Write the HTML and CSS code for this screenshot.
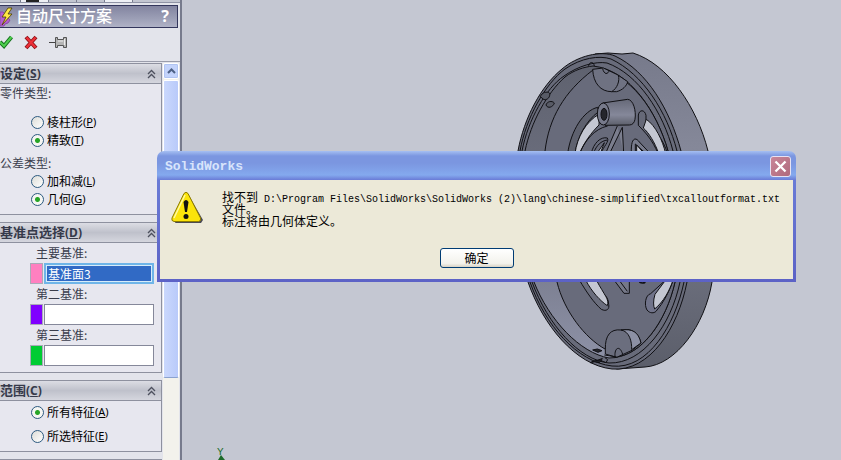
FILE: index.html
```html
<!DOCTYPE html>
<html lang="zh-CN">
<head>
    <meta charset="UTF-8">
    <meta name="viewport" content="width=device-width, initial-scale=1.0">
    <title>SolidWorks</title>

    <link rel="stylesheet" href="styles.css">
</head>
<body>

    <svg class="defs" width="0" height="0" aria-hidden="true">
        <symbol id="chevrons" viewBox="0 0 9 10">
            <path d="M1 5 4.500 1.500 8 5M1 9 4.500 5.500 8 9" fill="none" stroke="#4d505e" stroke-width="1.300"/>
        </symbol>
    </svg>

    <div class="app">
        <aside class="panel">
            <div class="tabs">
                <span></span>
                <span class="tabs__active"></span>
                <span></span>
                <span></span>
                <span class="tabs__light"></span>
            </div>

            <header class="panel__title">
                <svg class="panel__logo" width="13" height="20" viewBox="0 0 13 20" aria-hidden="true">
                    <path d="M0 5h3l2 2 3 1v3l2 2-2 3-3 1-1 2H0z" fill="#b45fd0" stroke="#8e4bac"/>
                    <path d="M8 1 2 10h4l-4 8 10-11H8l4-6z" fill="#ffe945" stroke="#4a3a00" stroke-width=".8"/>
                </svg>
                <h1>自动尺寸方案</h1>
                <button class="panel__help" type="button" aria-label="帮助">?</button>
            </header>

            <div class="panel__tools">
                <button type="button" aria-label="确定">
                    <svg width="13" height="15" viewBox="0 0 13 15">
                        <path d="M0 7 4 11 11.500 2" fill="none" stroke="#14701c" stroke-width="4"/>
                        <path d="M0 7 4 11 11.500 2" fill="none" stroke="#4fcf4f" stroke-width="2"/>
                    </svg>
                </button>
                <button type="button" aria-label="取消">
                    <svg width="14" height="15" viewBox="0 0 14 15">
                        <path d="M2 2 12 13M12 2 2 13" stroke="#8c1218" stroke-width="4"/>
                        <path d="M2.500 2.500 11.500 12.500M11.500 2.500 2.500 12.500" stroke="#ee3038" stroke-width="2.300"/>
                    </svg>
                </button>
                <button type="button" aria-label="保持可见">
                    <svg width="19" height="15" viewBox="0 0 19 15">
                        <path d="M0 7.500h6" stroke="#444"/>
                        <path d="M6.500 2.500h2v2h6v-2h3v10h-3v-2h-6v2h-2z" fill="#b5b5b5" stroke="#555"/>
                        <path d="M9 6h5M15.500 4v6" stroke="#eee"/>
                    </svg>
                </button>
            </div>

            <div class="panel__scroll">
                <form class="groups" action="#">
                    <section class="group">
                        <div class="group__head">
                            <h2>设定<span class="key">(<u>S</u>)</span></h2>
                            <button type="button" aria-label="折叠"><svg width="9" height="10"><use href="#chevrons"/></svg></button>
                        </div>
                        <div class="group__body">
                            <p class="caption">零件类型:</p>
                            <div class="radios radios--far">
                                <label><input type="radio" name="part">棱柱形<span class="key">(<u>P</u>)</span></label>
                                <label><input type="radio" name="part" checked>精致<span class="key">(<u>T</u>)</span></label>
                            </div>
                            <p class="caption caption--next">公差类型:</p>
                            <div class="radios">
                                <label><input type="radio" name="tolerance">加和减<span class="key">(<u>L</u>)</span></label>
                                <label><input type="radio" name="tolerance" checked>几何<span class="key">(<u>G</u>)</span></label>
                            </div>
                        </div>
                    </section>

                    <section class="group">
                        <div class="group__head">
                            <h2>基准点选择<span class="key">(<u>D</u>)</span></h2>
                            <button type="button" aria-label="折叠"><svg width="9" height="10"><use href="#chevrons"/></svg></button>
                        </div>
                        <div class="group__body datums">
                            <label for="datum1">主要基准:</label>
                            <div class="datum datum--pink"><input class="datum__active" id="datum1" type="text" value="基准面3"></div>
                            <label for="datum2">第二基准:</label>
                            <div class="datum datum--violet"><input id="datum2" type="text"></div>
                            <label for="datum3">第三基准:</label>
                            <div class="datum datum--green"><input id="datum3" type="text"></div>
                        </div>
                    </section>

                    <section class="group">
                        <div class="group__head">
                            <h2>范围<span class="key">(<u>C</u>)</span></h2>
                            <button type="button" aria-label="折叠"><svg width="9" height="10"><use href="#chevrons"/></svg></button>
                        </div>
                        <div class="group__body">
                            <div class="radios radios--loose">
                                <label><input type="radio" name="scope" checked>所有特征<span class="key">(<u>A</u>)</span></label>
                                <label><input type="radio" name="scope">所选特征<span class="key">(<u>E</u>)</span></label>
                            </div>
                        </div>
                    </section>

                    <section class="group">
                        <div class="group__head"></div>
                    </section>
                </form>

                <div class="scrollbar">
                    <button type="button" aria-label="向上滚动">
                        <svg width="9" height="6" viewBox="0 0 9 6"><path d="M1 5 4.500 1.500 8 5" fill="none" stroke="#4d6185" stroke-width="2"/></svg>
                    </button>
                    <div class="scrollbar__thumb"></div>
                </div>
            </div>
        </aside>

        <main class="canvas">
            <svg class="model" viewBox="182 0 659 460" preserveAspectRatio="xMinYMin slice" aria-hidden="true">
                <defs>
                    <linearGradient id="side" x1="0" y1="0" x2="0" y2="1">
                        <stop offset="0" stop-color="#777a8b"/>
                        <stop offset=".3" stop-color="#858899"/>
                        <stop offset=".7" stop-color="#6b6e7c"/>
                        <stop offset="1" stop-color="#5b5e6a"/>
                    </linearGradient>
                    <linearGradient id="wall" x1="0" y1="0" x2="0" y2="1">
                        <stop offset="0" stop-color="#5f626f"/>
                        <stop offset=".5" stop-color="#6f7282"/>
                        <stop offset="1" stop-color="#8d91a6"/>
                    </linearGradient>
                    <linearGradient id="boss" x1="0" y1="0" x2="0" y2="1">
                        <stop offset="0" stop-color="#666978"/>
                        <stop offset=".6" stop-color="#85889a"/>
                        <stop offset="1" stop-color="#5c5f6b"/>
                    </linearGradient>
                </defs>

                <!-- body of the wheel -->
                <g stroke="#101014" fill="none">
                    <path d="M595 54 608 53 622 54 633 53C668 64 697 107 708 151C717 195 718 240 712 282C705 325 676 365 645 367L617 369 590 360 560 100Z" fill="url(#side)"/>
                    <path d="M518 151C524 118 541 86 562 69C577 56 601 50 615 56C647 71 670 110 681 151C690 195 693 240 687 282C678 328 650 372 612 369C575 365 543 325 528 282C514 240 513 190 518 151Z" fill="#686b7a"/>
                    <path d="M520 151C526 118 545 84 565 69C581 58 599 55 611 59C643 74 667 112 677 151C687 195 689 240 684 282C675 325 648 370 612 366C577 362 545 325 530 282C516 240 515 190 520 151Z"/>
                    <path d="M522 151C528 120 546 88 564 76C578 66 595 61 607 63C638 74 663 112 673 151C683 195 685 240 680 282C671 325 643 364 609 363C579 360 548 325 532 282C518 240 517 190 522 151Z"/>
                    <path d="M525 151C531 122 547 93 565 77C574 70 584 67 593 66C630 70 657 112 668 151C678 195 680 240 675 282C666 322 641 358 609 358C580 353 549 320 534 282C520 240 519 190 525 151Z" fill="url(#wall)"/>
                    <path d="M545 151C549 118 564 92 593 70C630 70 657 112 668 151C678 195 680 240 675 282C666 322 641 356 614 357L605 349C585 338 564 311 557 282C545 240 542 190 545 151Z" fill="#686b7b"/>
                </g>

                <!-- upper half details -->
                <g transform="translate(500 40) scale(.33333)" stroke="#101014" stroke-width="3" fill="none">
                    <path d="M278 88C280 130 302 155 335 155H350C368 150 380 138 383 125L352 104 310 84Z" fill="#6f7282"/>
                    <path d="M335 155C352 145 360 122 355 106M308 86C312 104 324 105 328 90M266 78C268 64 281 64 283 78"/>
                    <path d="M121 170C125 158 141 152 149 160C151 170 144 180 132 179ZM138 195C141 184 156 181 163 189C159 202 143 207 138 195Z" fill="#585b66"/>
                    <path d="M293 202C250 212 213 272 203 340H225C232 292 258 242 296 215Z" fill="#5e616e"/>
                    <path d="M298 222C256 246 232 292 225 340H239C252 308 273 279 297 255Z" fill="#c4c7d2"/>
                    <path d="M323 258C282 267 255 302 239 340M274 340C280 310 302 289 322 294C329 304 310 320 303 340M280 340C290 315 303 303 322 300"/>
                    <path d="M291 340 313 308 301 340Z" fill="#c4c7d2"/>
                    <path d="M352 258 317 340H329L367 262 371 340" fill="#7b7e8e"/>
                    <path d="M415 225C418 208 434 208 438 226L438 243C471 271 492 308 503 340H474C457 300 437 278 415 256Z" fill="#666978"/>
                    <path d="M439 238C467 257 487 300 497 340H476C464 307 447 279 430 264Z" fill="#c4c7d2"/>
                    <path d="M394 340C392 292 407 290 418 306L450 340M406 340V312L437 340" fill="#777a8a"/>
                    <path d="M410 340V315L432 340Z" fill="#c4c7d2"/>
                    <path d="M308 189 383 178C400 179 409 212 405 238C403 249 397 255 388 255L315 256Z" fill="url(#boss)"/>
                    <ellipse cx="310" cy="222" rx="18" ry="33" fill="#777a8b"/>
                    <ellipse cx="312" cy="223" rx="9" ry="18" fill="#25262c"/>
                </g>

                <!-- lower half details -->
                <g transform="translate(500 270) scale(.33333)" stroke="#101014" stroke-width="3" fill="none">
                    <path d="M238 30C260 67 282 99 304 118C320 126 329 117 326 103C326 86 317 77 309 70L284 30Z" fill="#6b6e7d"/>
                    <path d="M257 30C274 64 302 94 322 107C329 88 313 76 289 30Z" fill="#c4c7d2"/>
                    <path d="M342 30 372 70H388V30M357 30 382 64" fill="#757888"/>
                    <path d="M497 30 452 71C436 75 432 105 441 120C450 131 462 130 468 124C491 98 508 64 520 30Z" fill="#70738a"/>
                    <path d="M497 30 465 73C459 93 460 108 464 117C490 96 509 62 519 30Z" fill="#c4c7d2"/>
                    <path d="M316 238C315 197 331 176 363 180C374 178 410 171 423 219L398 240 350 262 316 252Z" fill="#6b6e7e"/>
                    <path d="M363 180C388 184 396 214 395 239L423 219C415 184 396 176 363 180Z" fill="#8c90a4"/>
                    <path d="M345 259C343 232 360 225 368 253M313 255 350 261M315 263 323 269 318 278 304 272M272 279 308 265"/>
                    <path d="M278 240 292 237 306 242 294 247ZM275 274 306 269 298 278Z" fill="#25262c"/>
                    <path d="M418 36C425 40 431 40 436 36" stroke-width="5"/>
                </g>

                <!-- Y axis of the origin triad -->
                <text class="axis" x="217" y="455">Y</text>
                <path d="M221 455 225 460H218Z" fill="#1d6b2a"/>
            </svg>
        </main>

        <dialog class="message" open aria-labelledby="message-title">
            <div class="message__bar">
                <h2 id="message-title">SolidWorks</h2>
                <button class="message__close" type="button" aria-label="关闭">
                    <svg width="13" height="13" viewBox="0 0 13 13"><path d="M1.500 1.500 11.500 11.500M11.500 1.500 1.500 11.500" stroke="#fff" stroke-width="2.300"/></svg>
                </button>
            </div>
            <div class="message__body">
                <svg class="message__icon" width="32" height="32" viewBox="0 0 32 32" aria-hidden="true">
                    <path d="M17 3 32 29 30 32H4z" fill="#4b4b52"/>
                    <path d="M13 2.500Q15 0 17 2.500L29.500 27Q30.500 30 27.500 30.500H3Q0 30 1 27Z" fill="#fbe40b" stroke="#8c7b00"/>
                    <path d="M14 4 3 27" stroke="#fff9a0" stroke-width="1.500"/>
                    <path d="M12.500 11Q15 7 17.500 11L16 21H14Z" fill="#111"/>
                    <circle cx="15" cy="25.500" r="2.500" fill="#111"/>
                </svg>
                <p>找不到<span class="path"> D:\Program Files\SolidWorks\SolidWorks (2)\lang\chinese-simplified\txcalloutformat.txt</span><br>文件。<br>标注将由几何体定义。</p>
            </div>
            <div class="message__buttons">
                <button type="button">确定</button>
            </div>
        </dialog>
    </div>

</body>
</html>
```
FILE: styles.css
```css
* {
    box-sizing: border-box;
}

body {
    margin: 0;
    font-family: 'Noto Sans CJK SC', sans-serif;
    font-size: 12px;
    color: #000;
}

h1, h2, p {
    margin: 0;
}

button {
    padding: 0;
    border: none;
    background: none;
    font-family: inherit;
}

svg {
    display: block;
}

.defs {
    position: absolute;
}

.app {
    position: relative;
    display: flex;
    height: 100vh;
    overflow: hidden;
}

/* Left panel */

.panel {
    flex: none;
    display: flex;
    flex-direction: column;
    width: 182px;
    height: 100%;
    background: #e3e4eb;
    border-right: 2px solid #767a8c;
}

.tabs {
    flex: none;
    display: flex;
    height: 3px;
    margin-bottom: 2px;
    border-bottom: 1px solid #8f93a5;
    background: #c3c6d1;
}

.tabs span {
    width: 28px;
    border-right: 1px solid #777b8d;
}

.tabs span:first-child {
    width: 21px;
}

.tabs .tabs__active {
    background: linear-gradient(90deg, #eef0f5 5px, #222 5px, #222 18px, #eef0f5 18px);
}

.tabs .tabs__light {
    background: #eef0f5;
}

.panel__title {
    flex: none;
    display: flex;
    align-items: center;
    height: 23px;
    margin-right: 2px;
    border: 1px solid #33365c;
    border-left: none;
    background: linear-gradient(#8284a0, #9c9fb6 60%, #b0b2c6);
    color: #fff;
}

.panel__logo {
    margin-right: 3px;
}

.panel__title h1 {
    flex: 1;
    font-size: 16px;
    line-height: 20px;
    font-weight: 500;
    padding-bottom: 3px;
}

.panel__help {
    width: 24px;
    padding-bottom: 2px;
    font-family: 'Noto Sans', sans-serif;
    font-size: 16px;
    line-height: 20px;
    font-weight: bold;
    color: #fff;
}

.panel__tools {
    flex: none;
    display: flex;
    align-items: center;
    gap: 11px;
    height: 33px;
    padding-bottom: 5px;
}

.panel__scroll {
    flex: 1;
    display: flex;
    min-height: 0;
    padding-top: 1px;
    border-top: 1px solid #9a9dab;
}

.groups {
    flex: 1;
    display: flex;
    flex-direction: column;
    gap: 7px;
    overflow: hidden;
}

.group {
    flex: none;
    border: 1px solid #8e919f;
    border-left: none;
    background: #e7e7ef;
}

.group__head {
    display: flex;
    align-items: center;
    justify-content: space-between;
    height: 20px;
    padding-right: 5px;
    border-bottom: 1px solid #8e919f;
    background: linear-gradient(#dcdde4, #bfc1cb 50%, #d5d6de);
    color: #363a4a;
}

.group__head h2 {
    font-size: 13px;
    line-height: 18px;
    font-weight: bold;
}

.key {
    font-family: 'Noto Sans', sans-serif;
    font-size: 11px;
}

.group__head .key {
    font-size: 12px;
}

.group__body {
    padding-bottom: 6px;
    line-height: 18px;
}

.caption,
.datums label {
    color: #3a3d4c;
}

.caption--next {
    margin-top: 5px;
}

.radios {
    display: flex;
    flex-direction: column;
    padding-left: 31px;
}

.radios--far {
    margin-top: 11px;
}

.radios--loose {
    gap: 6px;
    padding-top: 2px;
}

.radios label {
    display: flex;
    align-items: center;
    height: 18px;
}

.radios input {
    appearance: none;
    width: 13px;
    height: 13px;
    margin: 0 3px 0 0;
    border: 1px solid #2c5a80;
    border-radius: 50%;
    background: linear-gradient(135deg, #dcdcd7, #fff);
}

.radios input:checked {
    background: radial-gradient(circle, #27a527 2px, #f6f6f3 3px);
}

.datums {
    display: grid;
    grid-template-columns: minmax(0, 1fr);
    gap: 1px;
    padding-top: 1px;
}

.datums label {
    padding-left: 36px;
}

.datum {
    display: flex;
    gap: 1px;
    height: 21px;
    margin: 0 7px 0 30px;
}

.datum::before {
    content: '';
    flex: none;
    width: 11px;
    border: 1px solid #a9abb8;
}

.datum--pink::before {
    background: #ff80c0;
}

.datum--violet::before {
    background: #8000ff;
}

.datum--green::before {
    background: #00cc33;
}

.datum input {
    flex: 1;
    min-width: 0;
    height: 21px;
    padding: 0 2px;
    border: 1px solid #85889a;
    background: #fff;
    font-family: inherit;
    font-size: 12px;
}

.datum .datum__active {
    border: 2px solid #6fb5e8;
    background: #316ac5;
    box-shadow: inset 0 0 0 1px #d6ecfa;
    color: #fff;
}

.scrollbar {
    flex: none;
    display: flex;
    flex-direction: column;
    gap: 1px;
    width: 16px;
    margin: 0 1px;
    background: #f3f2ec;
}

.scrollbar button {
    display: flex;
    align-items: center;
    justify-content: center;
    height: 16px;
    border: 1px solid #fff;
    border-radius: 2px;
    background: #c3d3fb;
    box-shadow: inset 0 0 0 1px #b0c4f3;
}

.scrollbar__thumb {
    height: 78%;
    max-height: 298px;
    border: 1px solid #fff;
    border-bottom-color: #8ba2cf;
    border-radius: 2px;
    background: linear-gradient(90deg, #cad8fd, #b9cafa);
}

/* Graphics area */

.canvas {
    flex: 1;
    min-width: 0;
    background: #c4c7d2;
}

.model {
    width: 100%;
    height: 100%;
}

.axis {
    font-family: 'Liberation Mono', monospace;
    font-size: 11px;
    fill: #1d6b2a;
}

/* Message box, lies over the panel and the model */

.message {
    position: absolute;
    top: 151px;
    left: 157px;
    right: 45px;
    width: auto;
    margin: 0;
    padding: 0 3px 3px;
    border: none;
    border-radius: 7px 7px 0 0;
    background: linear-gradient(#a5bff2, #7b96e0 5px, #7b96e0 12px, #84a9ee 24px, #6a7bd6 29px, #5c62c6);
    color: #000;
}

.message__bar {
    display: flex;
    align-items: center;
    justify-content: space-between;
    height: 29px;
    padding: 2px 2px 0 5px;
}

.message__bar h2 {
    font-family: 'Liberation Mono', monospace;
    font-size: 13px;
    color: #d8e4fb;
}

.message__close {
    display: flex;
    align-items: center;
    justify-content: center;
    width: 21px;
    height: 21px;
    border: 1px solid #e6e2f3;
    border-radius: 3px;
    background: linear-gradient(135deg, #c98699, #b06a7c);
}

.message__body {
    display: flex;
    gap: 19px;
    padding: 11px 10px 0 11px;
    background: #ece9d8;
    line-height: 12px;
}

.path {
    font-family: 'Liberation Mono', monospace;
    font-size: 10px;
    line-height: 0;
    white-space: pre;
}

.message__buttons {
    display: flex;
    justify-content: center;
    padding: 21px 0 11px;
    background: #ece9d8;
}

.message__buttons button {
    width: 74px;
    height: 20px;
    border: 1px solid #003c74;
    border-radius: 3px;
    background: linear-gradient(#fff, #f3f2ec 80%, #d8d2c4);
    font-size: 12px;
    line-height: 16px;
}
```
